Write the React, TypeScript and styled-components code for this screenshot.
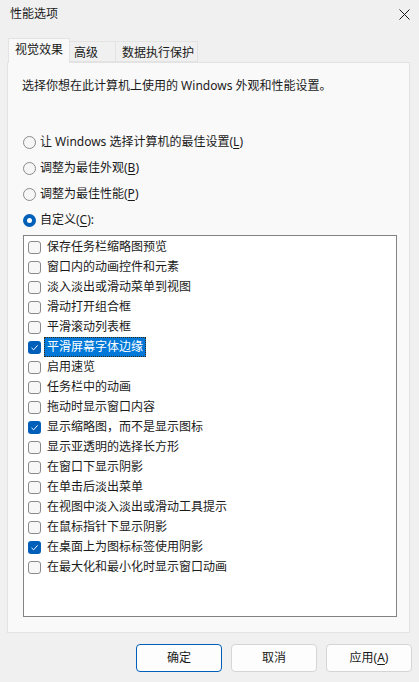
import React from "react";
import styled, { createGlobalStyle } from "styled-components";

const Global = createGlobalStyle`
  html, body { margin: 0; padding: 0; }
  body {
    font-family: "Noto Sans", "Noto Sans CJK SC", sans-serif;
    font-size: 12px;
    color: #1a1a1a;
    background: #f0f0f0;
  }
`;

const Window = styled.div`
  width: 419px;
  height: 682px;
  background: #f0f0f0;
  display: flex;
  flex-direction: column;
  box-sizing: border-box;
  overflow: hidden;
`;

const TitleBar = styled.div`
  height: 28px;
  display: flex;
  align-items: center;
  justify-content: space-between;
  padding: 0 9px 0 10px;
  font-size: 12px;
  line-height: 16px;
`;

const TitleText = styled.span`
  margin-top: -1px;
`;

const TabStrip = styled.div`
  display: flex;
  align-items: flex-end;
  height: 24px;
  margin-top: 10px;
  padding-left: 8px;
  position: relative;
  z-index: 1;
`;

const Tab = styled.div<{ $active?: boolean; $width: number; $pad: number }>`
  box-sizing: border-box;
  width: ${(p) => p.$width}px;
  height: ${(p) => (p.$active ? "25px" : "21px")};
  margin-bottom: ${(p) => (p.$active ? "-1px" : "0")};
  padding: ${(p) => (p.$active ? "3px" : "3px")} 0 0 ${(p) => p.$pad}px;
  border: 1px solid #e3e3e3;
  border-bottom: ${(p) => (p.$active ? "none" : "1px solid #e3e3e3")};
  margin-left: ${(p) => (p.$active ? "0" : "-1px")};
  background: ${(p) => (p.$active ? "#f9f9f9" : "#f0f0f0")};
  font-size: 12px;
  line-height: 16px;
  white-space: nowrap;
`;

const Pane = styled.div`
  box-sizing: border-box;
  margin: 0 9px 0 7px;
  height: 571px;
  background: #f9f9f9;
  border: 1px solid #e3e3e3;
  padding: 15px 14px 0 14px;
  display: flex;
  flex-direction: column;
`;

const Description = styled.div`
  line-height: 16px;
  height: 16px;
`;

const RadioGroup = styled.div`
  margin-top: 35px;
  display: flex;
  flex-direction: column;
`;

const RadioRow = styled.div`
  height: 26px;
  display: flex;
  align-items: center;
  padding-left: 1px;
  line-height: 16px;
`;

const RadioCircle = styled.span<{ $checked?: boolean }>`
  box-sizing: border-box;
  width: 13px;
  height: 13px;
  border-radius: 50%;
  flex: none;
  margin-right: 4px;
  border: ${(p) => (p.$checked ? "4px solid #005fb8" : "1px solid #8a8a8a")};
  background: ${(p) => (p.$checked ? "#ffffff" : "#f6f6f6")};
`;

const Mnemonic = styled.span`
  text-decoration: underline;
  text-underline-offset: 2px;
`;

const ListBox = styled.div`
  box-sizing: border-box;
  margin-top: 2px;
  margin-left: 1px;
  width: 374px;
  height: 382px;
  background: #ffffff;
  border: 1px solid #838383;
  padding: 1px 0 0 4px;
  display: flex;
  flex-direction: column;
`;

const ListItem = styled.div`
  height: 20px;
  display: flex;
  align-items: center;
`;

const CheckBox = styled.span<{ $checked?: boolean }>`
  box-sizing: border-box;
  width: 13px;
  height: 13px;
  border-radius: 3px;
  flex: none;
  margin-right: 3px;
  display: flex;
  align-items: center;
  justify-content: center;
  border: ${(p) => (p.$checked ? "none" : "1px solid #8a8a8a")};
  background: ${(p) => (p.$checked ? "#005fb8" : "#f7f7f7")};
`;

const ItemLabel = styled.span<{ $selected?: boolean }>`
  box-sizing: border-box;
  height: 20px;
  line-height: 18px;
  padding: 0 2px;
  border: 1px dotted ${(p) => (p.$selected ? "#3a2a10" : "transparent")};
  background: ${(p) => (p.$selected ? "#0078d7" : "transparent")};
  color: ${(p) => (p.$selected ? "#ffffff" : "#1a1a1a")};
  white-space: nowrap;
`;

const ButtonRow = styled.div`
  display: flex;
  justify-content: flex-end;
  gap: 9px;
  padding: 11px 7px 0 0;
`;

const Button = styled.div<{ $primary?: boolean }>`
  box-sizing: border-box;
  width: 86px;
  height: 28px;
  border-radius: 4px;
  background: #fdfdfd;
  border: 1px solid ${(p) => (p.$primary ? "#005fb8" : "#d5d5d5")};
  display: flex;
  align-items: center;
  justify-content: center;
  line-height: 16px;
`;

const CloseIcon = () => (
  <svg width="11" height="11" viewBox="0 0 11 11">
    <path d="M0.5 0.5 L10.5 10.5 M10.5 0.5 L0.5 10.5" stroke="#1a1a1a" strokeWidth="1" fill="none" />
  </svg>
);

const CheckMark = () => (
  <svg width="9" height="9" viewBox="0 0 9 9">
    <path d="M1.5 4.8 L3.6 6.8 L7.6 2.4" stroke="#ffffff" strokeWidth="1" fill="none" />
  </svg>
);

const items: { label: string; checked?: boolean; selected?: boolean }[] = [
  { label: "保存任务栏缩略图预览" },
  { label: "窗口内的动画控件和元素" },
  { label: "淡入淡出或滑动菜单到视图" },
  { label: "滑动打开组合框" },
  { label: "平滑滚动列表框" },
  { label: "平滑屏幕字体边缘", checked: true, selected: true },
  { label: "启用速览" },
  { label: "任务栏中的动画" },
  { label: "拖动时显示窗口内容" },
  { label: "显示缩略图，而不是显示图标", checked: true },
  { label: "显示亚透明的选择长方形" },
  { label: "在窗口下显示阴影" },
  { label: "在单击后淡出菜单" },
  { label: "在视图中淡入淡出或滑动工具提示" },
  { label: "在鼠标指针下显示阴影" },
  { label: "在桌面上为图标标签使用阴影", checked: true },
  { label: "在最大化和最小化时显示窗口动画" },
];

export default function App() {
  return (
    <>
      <Global />
      <Window>
        <TitleBar>
          <TitleText>性能选项</TitleText>
          <CloseIcon />
        </TitleBar>
        <TabStrip>
          <Tab $active $width={62} $pad={6}>视觉效果</Tab>
          <Tab $width={47} $pad={4}>高级</Tab>
          <Tab $width={83} $pad={6}>数据执行保护</Tab>
        </TabStrip>
        <Pane>
          <Description>选择你想在此计算机上使用的 Windows 外观和性能设置。</Description>
          <RadioGroup>
            <RadioRow>
              <RadioCircle />
              <span>
                让 Windows 选择计算机的最佳设置(<Mnemonic>L</Mnemonic>)
              </span>
            </RadioRow>
            <RadioRow>
              <RadioCircle />
              <span>
                调整为最佳外观(<Mnemonic>B</Mnemonic>)
              </span>
            </RadioRow>
            <RadioRow>
              <RadioCircle />
              <span>
                调整为最佳性能(<Mnemonic>P</Mnemonic>)
              </span>
            </RadioRow>
            <RadioRow>
              <RadioCircle $checked />
              <span>
                自定义(<Mnemonic>C</Mnemonic>):
              </span>
            </RadioRow>
          </RadioGroup>
          <ListBox>
            {items.map((it) => (
              <ListItem key={it.label}>
                <CheckBox $checked={it.checked}>{it.checked && <CheckMark />}</CheckBox>
                <ItemLabel $selected={it.selected}>{it.label}</ItemLabel>
              </ListItem>
            ))}
          </ListBox>
        </Pane>
        <ButtonRow>
          <Button $primary>确定</Button>
          <Button>取消</Button>
          <Button>
            <span>
              应用(<Mnemonic>A</Mnemonic>)
            </span>
          </Button>
        </ButtonRow>
      </Window>
    </>
  );
}
